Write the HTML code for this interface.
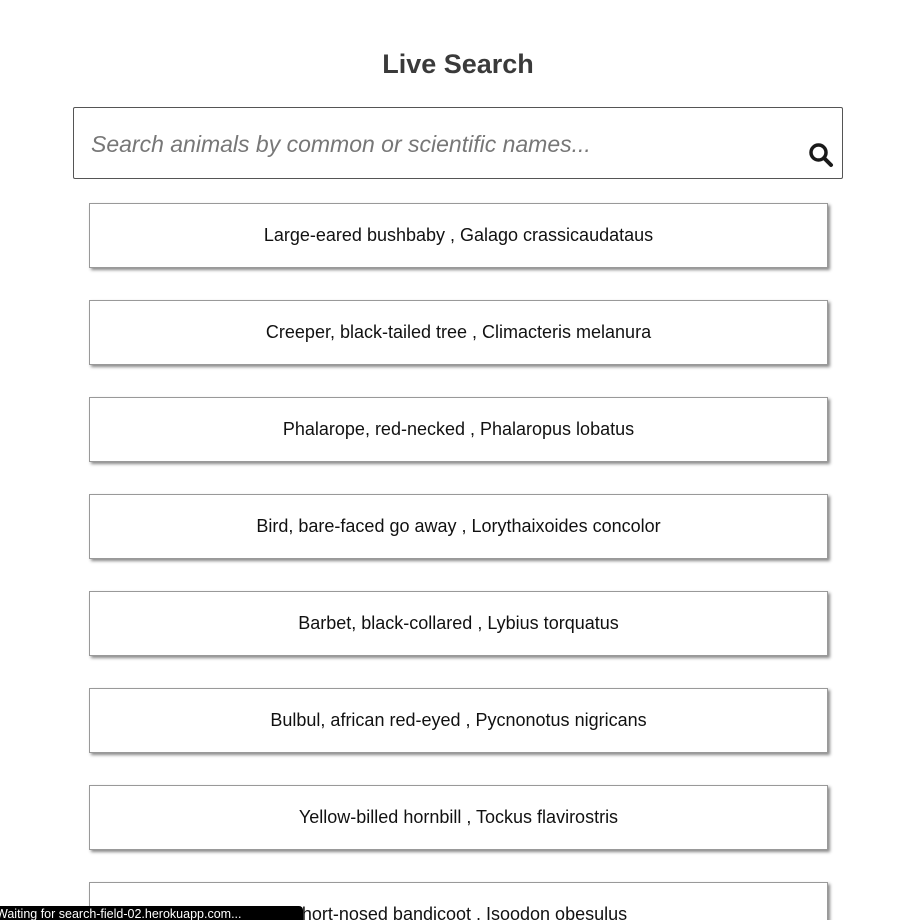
<!DOCTYPE html>
<html><head><meta charset="utf-8"><style>
html,body{margin:0;height:920px;overflow:hidden}
body{background:#fff;font-family:"Liberation Sans",sans-serif;width:923px;position:relative}
h1{position:absolute;top:49px;left:0;width:916px;text-align:center;margin:0;font-size:27px;font-weight:bold;color:#3a3a3a}
.search{position:absolute;left:73px;top:107px;width:768px;height:70px;border:1px solid #555;border-radius:2px}
.ph{position:absolute;left:17px;top:23px;font-size:23px;font-style:italic;color:#777}
.card{position:absolute;left:89px;width:737px;height:63px;border:1px solid #999;box-shadow:2px 2px 3px #888;text-align:center;line-height:63px;font-size:18px;color:#111;background:#fff}
.status{position:absolute;left:0;top:906px;width:303px;height:14px;background:#000;border-top-right-radius:4px;color:#fff;font-size:12.5px;line-height:16px;white-space:nowrap;overflow:hidden}
</style></head><body>
<h1>Live Search</h1>
<div class="search"><div class="ph">Search animals by common or scientific names...</div>
<svg style="position:absolute;left:734px;top:34px" width="26" height="26" viewBox="0 0 26 26"><circle cx="10.5" cy="10.5" r="7.5" fill="none" stroke="#1a1a1a" stroke-width="3.5"/><line x1="16" y1="16" x2="23" y2="23" stroke="#1a1a1a" stroke-width="4" stroke-linecap="round"/></svg></div>
<div class="card" style="top:203px">Large-eared bushbaby , Galago crassicaudataus</div>
<div class="card" style="top:300px">Creeper, black-tailed tree , Climacteris melanura</div>
<div class="card" style="top:397px">Phalarope, red-necked , Phalaropus lobatus</div>
<div class="card" style="top:494px">Bird, bare-faced go away , Lorythaixoides concolor</div>
<div class="card" style="top:591px">Barbet, black-collared , Lybius torquatus</div>
<div class="card" style="top:688px">Bulbul, african red-eyed , Pycnonotus nigricans</div>
<div class="card" style="top:785px">Yellow-billed hornbill , Tockus flavirostris</div>
<div class="card" style="top:882px">Short-nosed bandicoot , Isoodon obesulus</div>
<div class="status"><span style="margin-left:-4px">Waiting for search-field-02.herokuapp.com...</span></div>
</body></html>
